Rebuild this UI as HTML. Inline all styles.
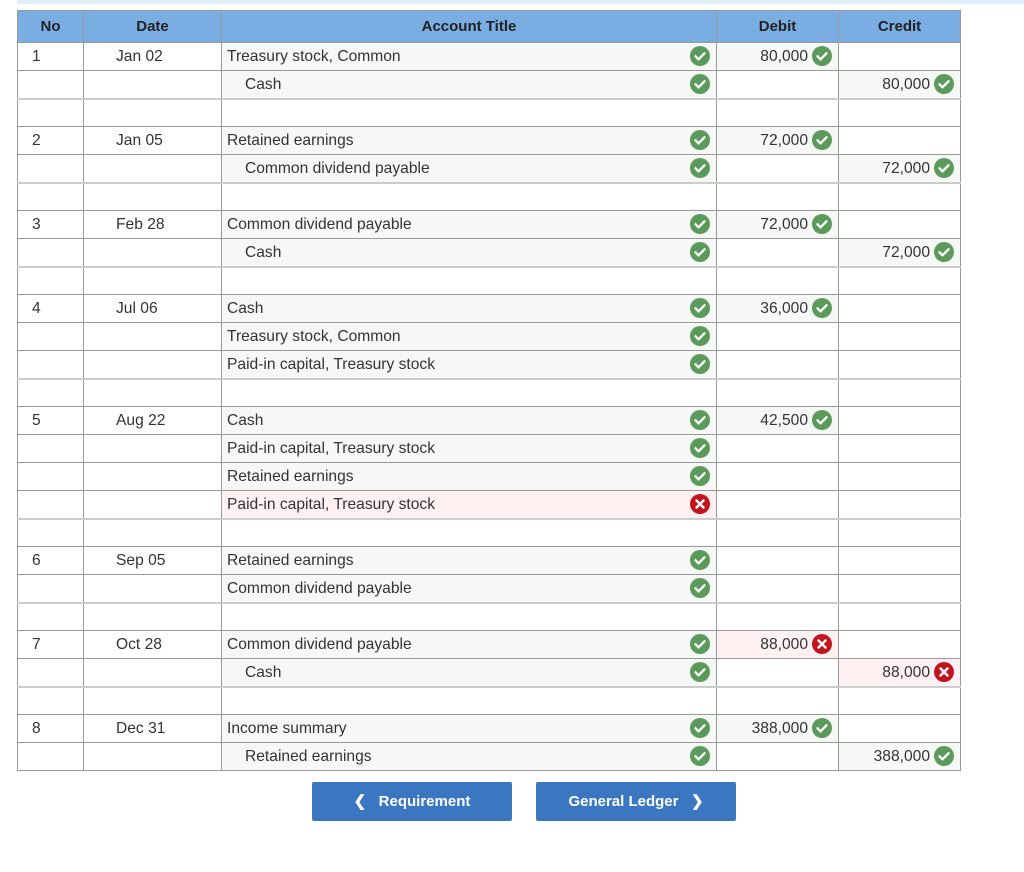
<!DOCTYPE html>
<html><head><meta charset="utf-8"><style>
body{margin:0;background:#fff;font-family:"Liberation Sans",Arial,sans-serif;color:#333;}
.topbar{position:absolute;left:17px;top:0;width:1007px;height:4px;background:#e1eefa;}
table{position:absolute;left:17px;top:10px;border-collapse:collapse;table-layout:fixed;width:944px;font-size:15.6px;}
td,th{border:1px solid #999;height:27px;padding:0;}
th{background:#7aaee3;font-weight:bold;font-size:15px;color:#222;height:31px;}
td.n{padding-left:14px;}
td.d{padding-left:32px;}
td.a{background:#f6f8f6;padding-left:5px;position:relative;}
td.a.i{padding-left:23px;}
td.a.bad{background:#fff1f1;}
td.v{text-align:right;padding-right:6px;}
td.v.fill{background:#f6f8f6;}
td.v.bad{background:#fff1f1;}
tr.blank td{border-top:2px solid #ccc;height:26px;}
svg.ic{width:20px;height:20px;vertical-align:middle;}
td.a svg.ic{position:absolute;right:6px;top:50%;margin-top:-11px;}
td.v svg.ic{margin-left:4px;position:relative;top:-1px;}
.btn{position:absolute;top:782px;height:39px;width:200px;background:#3a77c0;color:#fff;font-weight:bold;font-size:15px;line-height:39px;text-align:center;border-radius:2px;}
</style></head><body>
<svg width="0" height="0" style="position:absolute"><defs>
<symbol id="ok" viewBox="0 0 20 20"><circle cx="10" cy="10" r="10" fill="#5b9a5b"/><path d="M5.5 10.3l3 3 6-6" stroke="#fff" stroke-width="2.4" fill="none" stroke-linecap="round" stroke-linejoin="round"/></symbol>
<symbol id="no" viewBox="0 0 20 20"><circle cx="10" cy="10" r="10" fill="#c1151f"/><path d="M6.5 6.5l7 7M13.5 6.5l-7 7" stroke="#fff" stroke-width="2.4" stroke-linecap="round"/></symbol>
</defs></svg>
<div class="topbar"></div>
<table>
<colgroup><col style="width:66px"><col style="width:138px"><col style="width:495px"><col style="width:122px"><col style="width:122px"></colgroup>
<tr><th>No</th><th>Date</th><th>Account Title</th><th>Debit</th><th>Credit</th></tr>

<tr><td class="n">1</td><td class="d">Jan 02</td><td class="a">Treasury stock, Common<svg class="ic"><use href="#ok"/></svg></td><td class="v fill">80,000<svg class="ic"><use href="#ok"/></svg></td><td class="v"></td></tr>
<tr><td></td><td></td><td class="a i">Cash<svg class="ic"><use href="#ok"/></svg></td><td class="v"></td><td class="v fill">80,000<svg class="ic"><use href="#ok"/></svg></td></tr>
<tr class="blank"><td></td><td></td><td></td><td></td><td></td></tr>

<tr><td class="n">2</td><td class="d">Jan 05</td><td class="a">Retained earnings<svg class="ic"><use href="#ok"/></svg></td><td class="v fill">72,000<svg class="ic"><use href="#ok"/></svg></td><td class="v"></td></tr>
<tr><td></td><td></td><td class="a i">Common dividend payable<svg class="ic"><use href="#ok"/></svg></td><td class="v"></td><td class="v fill">72,000<svg class="ic"><use href="#ok"/></svg></td></tr>
<tr class="blank"><td></td><td></td><td></td><td></td><td></td></tr>

<tr><td class="n">3</td><td class="d">Feb 28</td><td class="a">Common dividend payable<svg class="ic"><use href="#ok"/></svg></td><td class="v fill">72,000<svg class="ic"><use href="#ok"/></svg></td><td class="v"></td></tr>
<tr><td></td><td></td><td class="a i">Cash<svg class="ic"><use href="#ok"/></svg></td><td class="v"></td><td class="v fill">72,000<svg class="ic"><use href="#ok"/></svg></td></tr>
<tr class="blank"><td></td><td></td><td></td><td></td><td></td></tr>

<tr><td class="n">4</td><td class="d">Jul 06</td><td class="a">Cash<svg class="ic"><use href="#ok"/></svg></td><td class="v fill">36,000<svg class="ic"><use href="#ok"/></svg></td><td class="v"></td></tr>
<tr><td></td><td></td><td class="a">Treasury stock, Common<svg class="ic"><use href="#ok"/></svg></td><td class="v"></td><td class="v"></td></tr>
<tr><td></td><td></td><td class="a">Paid-in capital, Treasury stock<svg class="ic"><use href="#ok"/></svg></td><td class="v"></td><td class="v"></td></tr>
<tr class="blank"><td></td><td></td><td></td><td></td><td></td></tr>

<tr><td class="n">5</td><td class="d">Aug 22</td><td class="a">Cash<svg class="ic"><use href="#ok"/></svg></td><td class="v fill">42,500<svg class="ic"><use href="#ok"/></svg></td><td class="v"></td></tr>
<tr><td></td><td></td><td class="a">Paid-in capital, Treasury stock<svg class="ic"><use href="#ok"/></svg></td><td class="v"></td><td class="v"></td></tr>
<tr><td></td><td></td><td class="a">Retained earnings<svg class="ic"><use href="#ok"/></svg></td><td class="v"></td><td class="v"></td></tr>
<tr><td></td><td></td><td class="a bad">Paid-in capital, Treasury stock<svg class="ic"><use href="#no"/></svg></td><td class="v"></td><td class="v"></td></tr>
<tr class="blank"><td></td><td></td><td></td><td></td><td></td></tr>

<tr><td class="n">6</td><td class="d">Sep 05</td><td class="a">Retained earnings<svg class="ic"><use href="#ok"/></svg></td><td class="v"></td><td class="v"></td></tr>
<tr><td></td><td></td><td class="a">Common dividend payable<svg class="ic"><use href="#ok"/></svg></td><td class="v"></td><td class="v"></td></tr>
<tr class="blank"><td></td><td></td><td></td><td></td><td></td></tr>

<tr><td class="n">7</td><td class="d">Oct 28</td><td class="a">Common dividend payable<svg class="ic"><use href="#ok"/></svg></td><td class="v bad">88,000<svg class="ic"><use href="#no"/></svg></td><td class="v"></td></tr>
<tr><td></td><td></td><td class="a i">Cash<svg class="ic"><use href="#ok"/></svg></td><td class="v"></td><td class="v bad">88,000<svg class="ic"><use href="#no"/></svg></td></tr>
<tr class="blank"><td></td><td></td><td></td><td></td><td></td></tr>

<tr><td class="n">8</td><td class="d">Dec 31</td><td class="a">Income summary<svg class="ic"><use href="#ok"/></svg></td><td class="v fill">388,000<svg class="ic"><use href="#ok"/></svg></td><td class="v"></td></tr>
<tr><td></td><td></td><td class="a i">Retained earnings<svg class="ic"><use href="#ok"/></svg></td><td class="v"></td><td class="v fill">388,000<svg class="ic"><use href="#ok"/></svg></td></tr>
</table>
<div class="btn" style="left:312px">&#10094;&nbsp;&nbsp;&nbsp;Requirement</div>
<div class="btn" style="left:536px">General Ledger&nbsp;&nbsp;&nbsp;&#10095;</div>
</body></html>
